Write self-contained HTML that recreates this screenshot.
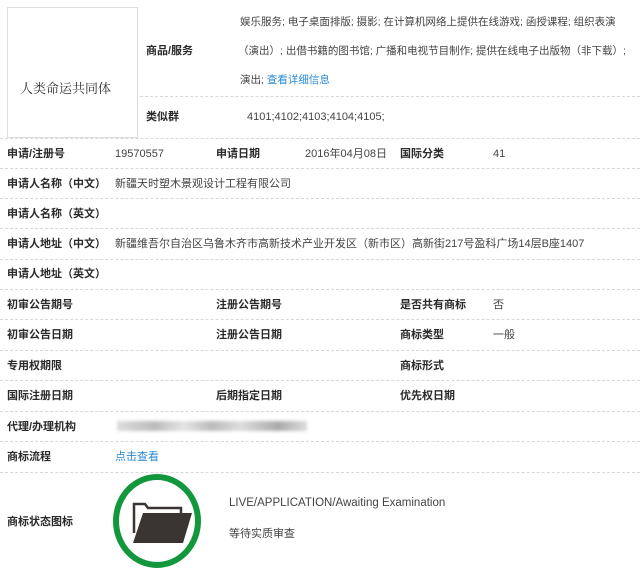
<!DOCTYPE html>
<html><head><meta charset="utf-8"><style>
*{margin:0;padding:0;box-sizing:border-box}
body{width:640px;height:572px;background:#fff;font-family:"Liberation Sans","Noto Sans CJK SC",sans-serif;font-size:11px;color:#444;position:relative;overflow:hidden}
.a{position:absolute;white-space:nowrap;line-height:14px}
.b{font-weight:bold;color:#2a2a2a}
.l{position:absolute;left:0;width:640px;height:0;border-top:1px dashed #d8d8d8}
.k{color:#2a8ad4}
.g{font-size:10.5px}
</style></head><body>
<div style="position:absolute;left:7px;top:7px;width:131px;height:131px;border:1px solid #ddd;background:#fff"></div>
<div class="a" style="left:20px;top:82px;font-family:'Liberation Serif','Noto Serif CJK SC',serif;font-size:13px;color:#333">人类命运共同体</div>
<div class="a b" style="left:146px;top:44px">商品/服务</div>
<div class="a g" style="left:240px;top:15px">娱乐服务; 电子桌面排版; 摄影; 在计算机网络上提供在线游戏; 函授课程; 组织表演</div>
<div class="a g" style="left:238px;top:44px">（演出）; 出借书籍的图书馆; 广播和电视节目制作; 提供在线电子出版物（非下载）;</div>
<div class="a g" style="left:240px;top:73px">演出; <span class="k">查看详细信息</span></div>
<div class="l" style="left:140px;width:500px;top:96px"></div>
<div class="a b" style="left:146px;top:110px">类似群</div>
<div class="a" style="left:247px;top:110px">4101;4102;4103;4104;4105;</div>
<div class="l" style="top:138px"></div>
<div class="a b" style="left:7px;top:147px">申请/注册号</div>
<div class="a" style="left:115px;top:147px">19570557</div>
<div class="a b" style="left:216px;top:147px">申请日期</div>
<div class="a" style="left:305px;top:147px">2016年04月08日</div>
<div class="a b" style="left:400px;top:147px">国际分类</div>
<div class="a" style="left:493px;top:147px">41</div>
<div class="l" style="top:168px"></div>
<div class="a b" style="left:7px;top:177px">申请人名称（中文）</div>
<div class="a" style="left:115px;top:177px">新疆天时塑木景观设计工程有限公司</div>
<div class="l" style="top:198px"></div>
<div class="a b" style="left:7px;top:207px">申请人名称（英文）</div>
<div class="l" style="top:228px"></div>
<div class="a b" style="left:7px;top:237px">申请人地址（中文）</div>
<div class="a" style="left:115px;top:237px">新疆维吾尔自治区乌鲁木齐市高新技术产业开发区（新市区）高新街217号盈科广场14层B座1407</div>
<div class="l" style="top:259px"></div>
<div class="a b" style="left:7px;top:267px">申请人地址（英文）</div>
<div class="l" style="top:289px"></div>
<div class="a b" style="left:7px;top:298px">初审公告期号</div>
<div class="a b" style="left:216px;top:298px">注册公告期号</div>
<div class="a b" style="left:400px;top:298px">是否共有商标</div>
<div class="a" style="left:493px;top:298px">否</div>
<div class="l" style="top:319px"></div>
<div class="a b" style="left:7px;top:328px">初审公告日期</div>
<div class="a b" style="left:216px;top:328px">注册公告日期</div>
<div class="a b" style="left:400px;top:328px">商标类型</div>
<div class="a" style="left:493px;top:328px">一般</div>
<div class="l" style="top:350px"></div>
<div class="a b" style="left:7px;top:359px">专用权期限</div>
<div class="a b" style="left:400px;top:359px">商标形式</div>
<div class="l" style="top:380px"></div>
<div class="a b" style="left:7px;top:389px">国际注册日期</div>
<div class="a b" style="left:216px;top:389px">后期指定日期</div>
<div class="a b" style="left:400px;top:389px">优先权日期</div>
<div class="l" style="top:411px"></div>
<div class="a b" style="left:7px;top:420px">代理/办理机构</div>
<div style="position:absolute;left:117px;top:421px;width:190px;height:10px;background:linear-gradient(90deg,#ddd,#bbb 20%,#e5e5e5 35%,#bbb 50%,#ddd 65%,#aaa 85%,#ddd);filter:blur(1.5px)"></div>
<div class="l" style="top:441px"></div>
<div class="a b" style="left:7px;top:450px">商标流程</div>
<div class="a k" style="left:115px;top:450px">点击查看</div>
<div class="l" style="top:472px"></div>
<div class="a b" style="left:7px;top:515px">商标状态图标</div>
<svg style="position:absolute;left:110px;top:473px" width="96" height="98" viewBox="0 0 96 98">
<ellipse cx="47" cy="48" rx="41" ry="44" fill="none" stroke="#13973d" stroke-width="6"/>
<path d="M24 60 V31 H35 L38 35 H71 V40" fill="none" stroke="#3a3533" stroke-width="2.5"/>
<path d="M33 40 H82 L73 70 H23 Z" fill="#3a3533"/>
</svg>
<div class="a" style="left:229px;top:496px;font-size:11.5px">LIVE/APPLICATION/Awaiting Examination</div>
<div class="a" style="left:229px;top:527px">等待实质审查</div>
</body></html>
